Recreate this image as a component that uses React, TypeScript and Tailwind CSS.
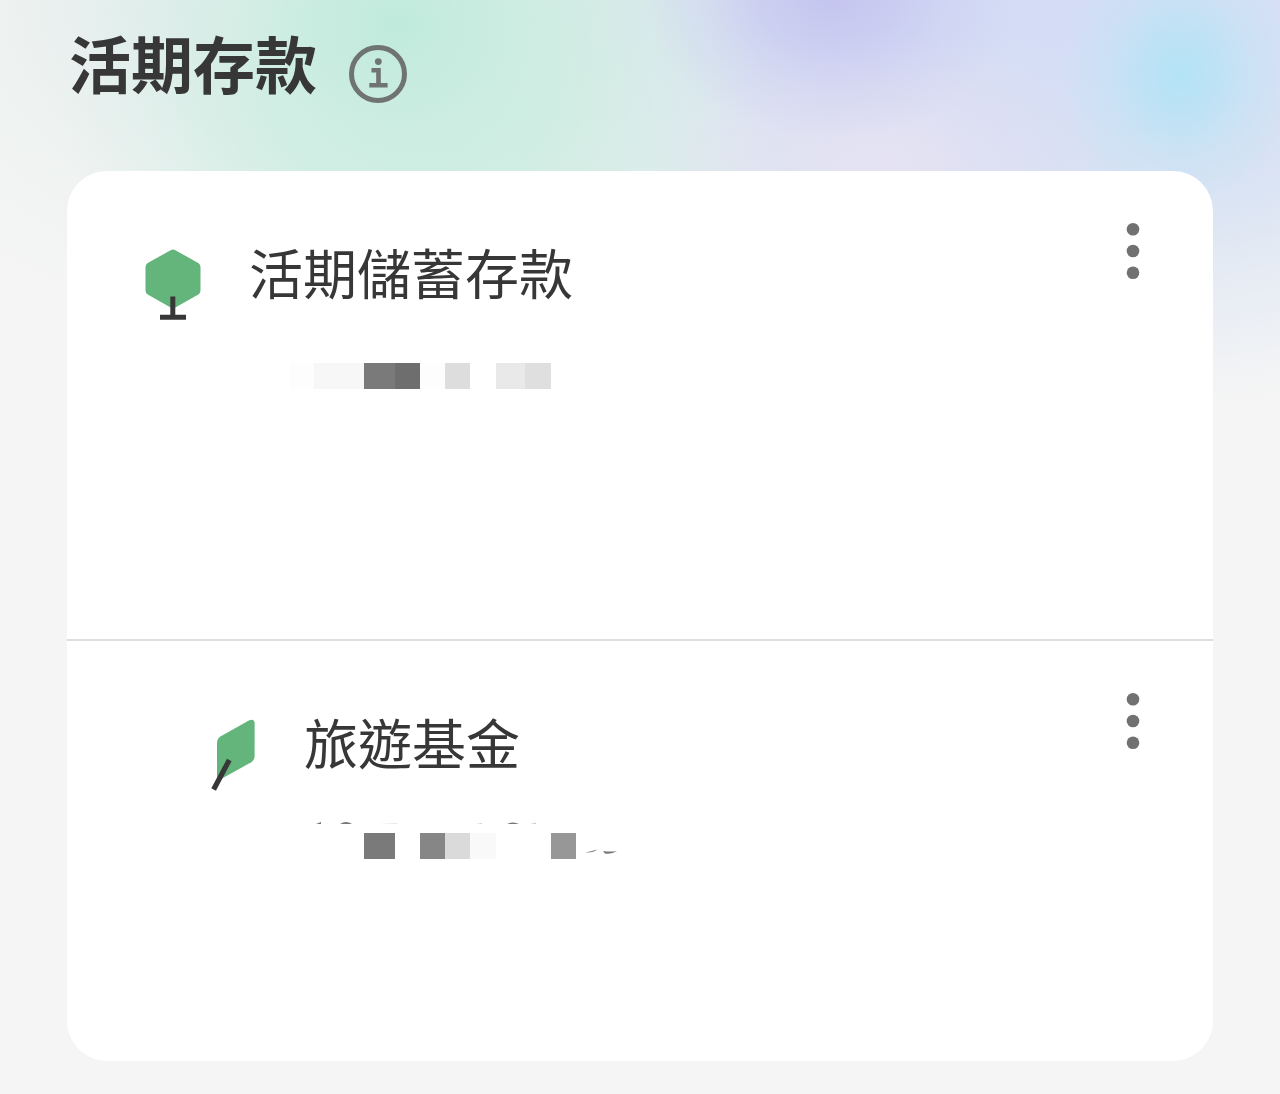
import type { ReactNode } from "react";

interface Block {
    x: number;
    w: number;
    fill: string;
}

interface AccountRowProps {
    name: string;
    icon: ReactNode;
    nested?: boolean;
    children: ReactNode;
}

const savingsBlocks: Block[] = [
    { x: 41, w: 24, fill: "#fdfdfd" },
    { x: 65, w: 50, fill: "#f7f7f7" },
    { x: 115, w: 31, fill: "#7a7a7a" },
    { x: 146, w: 25, fill: "#6e6e6e" },
    { x: 171, w: 25, fill: "#fdfdfd" },
    { x: 196, w: 25, fill: "#dddddd" },
    { x: 247, w: 29, fill: "#e9e9e9" },
    { x: 276, w: 26, fill: "#dfdfdf" },
];

const travelBlocks: Block[] = [
    { x: 60, w: 31, fill: "#7a7a7a" },
    { x: 116, w: 25, fill: "#868686" },
    { x: 141, w: 25, fill: "#dadada" },
    { x: 166, w: 26, fill: "#f9f9f9" },
    { x: 247, w: 25, fill: "#979797" },
];

const InfoIcon = () => (
    <svg viewBox="0 0 58 58" className="h-[58px] w-[58px]" fill="none" stroke="#6f7372" aria-hidden="true">
        <circle cx="29" cy="29" r="26.5" strokeWidth="5" />
        <circle cx="29.3" cy="16.6" r="3.4" fill="#6f7372" stroke="none" />
        <path d="M22.5 25.2H29.5V40M20.3 40.2H38.6" strokeWidth="4.6" />
    </svg>
);

const MoreIcon = () => (
    <svg viewBox="0 0 14 58" className="h-[58px] w-3.5" fill="#717171" aria-hidden="true">
        <circle cx="7" cy="7.2" r="6.3" />
        <circle cx="7" cy="29" r="6.3" />
        <circle cx="7" cy="50.8" r="6.3" />
    </svg>
);

const TreeIcon = () => (
    <svg viewBox="0 0 56 72" className="h-[72px] w-14" aria-hidden="true">
        <path d="M25.6 1.2Q28 -.2 30.4 1.2L53.3 14Q55.5 15.4 55.5 18V41.6Q55.5 44.2 53.3 45.4L30.4 58.4Q28 59.8 25.6 58.4L2.7 45.4Q.5 44.2 .5 41.6V18Q.5 15.4 2.7 14Z" fill="#64b57c" />
        <path d="M27.8 47.5V68M15 68.3H41" fill="none" stroke="#373737" strokeWidth="5" />
    </svg>
);

const LeafIcon = () => (
    <svg viewBox="0 0 45 72" className="h-[72px] w-[45px]" aria-hidden="true">
        <path d="M6 24Q6 19.6 9.4 17.4L38.3 1.2Q43.6 -.8 43.6 4.4V37Q43.6 41 40.2 43.2L11 59.6Q6 61.8 6 57Z" fill="#64b57c" />
        <path d="M18.3 41L2.6 70.5" fill="none" stroke="#373737" strokeWidth="5.2" />
    </svg>
);

const Mosaic = ({ blocks, children }: { blocks: Block[]; children?: ReactNode }) => (
    <svg viewBox="0 0 330 44" className="mt-12 h-11 w-[330px]" shapeRendering="crispEdges" aria-hidden="true">
        {blocks.map((b) => (
            <rect key={b.x} x={b.x} y="14" width={b.w} height="26" fill={b.fill} />
        ))}
        {children}
    </svg>
);

const AccountRow = ({ name, icon, nested, children }: AccountRowProps) => {
    return (
        <li className={nested ? "flex items-start pt-10 pr-14 pb-[198px] pl-36" : "flex items-start pt-10 pr-14 pb-[246px] pl-[78px]"}>
            <div className="mt-[38px] shrink-0">{icon}</div>
            <div className="mt-8 ml-12 min-w-0 flex-1">
                <h2 className="text-[54px] leading-[58px] font-normal">{name}</h2>
                {children}
            </div>
            <button type="button" aria-label={name} className="flex h-20 w-12 shrink-0 items-center justify-center">
                <MoreIcon />
            </button>
        </li>
    );
};

const App = () => {
    return (
        <div className="relative isolate min-h-screen overflow-hidden bg-[#f5f5f5] font-['Noto_Sans_CJK_TC',sans-serif] text-[#373737]">
            {/* soft colour glow behind the header */}
            <div className="absolute inset-x-0 top-0 -z-10 h-[420px] bg-[radial-gradient(120px_135px_at_92.2%_75px,#b4e3f6_0%,#b8e3f5cc_30%,#c0e4f477_60%,#c8e4f400_100%),radial-gradient(190px_150px_at_65%_-10px,#c4c4ef_0%,#c4c4efaa_35%,#c8c8f055_65%,#c8c8f000_100%),radial-gradient(220px_130px_at_69%_160px,#e5e3f3_0%,#e3dff299_45%,#e2dcf200_100%),radial-gradient(130px_110px_at_31%_25px,#bfeadc_0%,#bfeadc66_50%,#bfeadc00_100%),radial-gradient(350px_350px_at_32%_70px,#ccede1_0%,#cceee1cc_40%,#d4efe666_70%,#d8f0e800_100%),radial-gradient(480px_260px_at_84%_0px,#d4dcf6_0%,#d4dcf6aa_40%,#d8e2f400_100%),radial-gradient(560px_370px_at_88%_40px,#d8e3f2_0%,#dae4f3dd_50%,#e0e8f488_75%,#e4ebf400_100%),radial-gradient(860px_390px_at_50%_0px,#d7e6e7_0%,#d9e8e7cc_45%,#e0ece955_75%,#e4efec00_100%)]" />
            <header className="flex items-start gap-8 px-[69px] pt-[22px]">
                <h1 className="text-[62px] leading-[80px] font-bold">活期存款</h1>
                <button type="button" aria-label="活期存款" className="mt-[23px]">
                    <InfoIcon />
                </button>
            </header>
            <main className="mt-[68px] px-[67px] pb-[33px]">
                <ul className="divide-y-2 divide-[#dedede] rounded-[40px] bg-white">
                    <AccountRow name="活期儲蓄存款" icon={<TreeIcon />}>
                        <Mosaic blocks={savingsBlocks} />
                    </AccountRow>
                    <AccountRow name="旅遊基金" icon={<LeafIcon />} nested>
                        <Mosaic blocks={travelBlocks}>
                            <g fill="#777777" shapeRendering="auto">
                                <path d="M12 5L17 3V5Z M36 5Q42 1 48 5Z M203 5Q209 2 215 5Z" />
                                <path d="M172 5L178 4V5Z M226 5L232 3.5V5Z M75 5L93 4.4V5Z" opacity=".35" />
                                <path d="M281 33.5Q287 32.5 293 30.5Q290 34 281 33.5Z M299 32Q306 33 313 32Q308 35.5 301 34.5Z" />
                            </g>
                        </Mosaic>
                    </AccountRow>
                </ul>
            </main>
        </div>
    );
};

export default App;
